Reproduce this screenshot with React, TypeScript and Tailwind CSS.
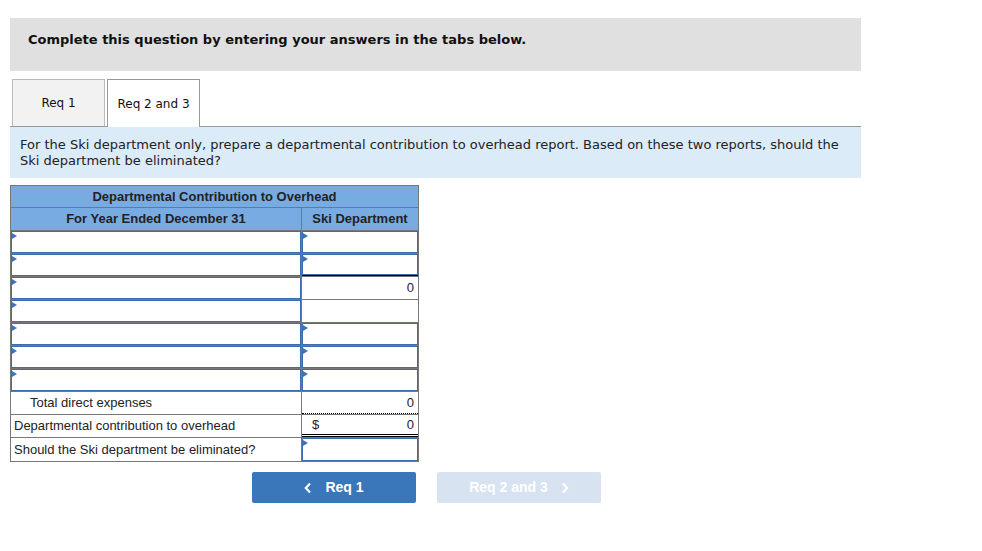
import React from 'react';

const verdana = { fontFamily: '"DejaVu Sans", Verdana, sans-serif' };
const arial = { fontFamily: '"Liberation Sans", Arial, sans-serif' };

const Marker: React.FC = () => (
  <span className="absolute left-[1px] top-[2px] h-0 w-0 border-y-[3px] border-l-[5px] border-y-transparent border-l-[#3d74bb]" />
);

const InputCell: React.FC<{ className?: string }> = ({ className = '' }) => (
  <div className={`relative h-full ${className}`}>
    <div className="h-full w-full border border-[#3b6db0] bg-white" />
    <Marker />
  </div>
);

type Row = {
  left: 'input' | string;
  indent?: boolean;
  right: 'input' | 'blank' | string;
  dollar?: boolean;
  rightBorder?: string;
};

const rows: Row[] = [
  { left: 'input', right: 'input' },
  { left: 'input', right: 'input', rightBorder: 'border-b border-b-black' },
  { left: 'input', right: '0' },
  { left: 'input', right: 'blank' },
  { left: 'input', right: 'input' },
  { left: 'input', right: 'input' },
  { left: 'input', right: 'input' },
  { left: 'Total direct expenses', indent: true, right: '0', rightBorder: 'border-b border-dotted border-b-black' },
  { left: 'Departmental contribution to overhead', right: '0', dollar: true, rightBorder: 'border-b-[3px] border-double border-b-black' },
  { left: 'Should the Ski department be eliminated?', right: 'input' },
];

export default function App() {
  return (
    <div className="min-h-screen bg-white pl-[10px] pt-[18px]" style={verdana}>
      <div className="w-[851px]">
        <div className="h-[53px] bg-[#e0e0e0] px-[18px] pt-[14px] text-[13px] font-bold leading-[16px] text-[#111]">
          Complete this question by entering your answers in the tabs below.
        </div>

        <div className="mt-[8px] flex items-end gap-[2px] border-b border-[#999] pl-[2px] text-[12px] text-[#111]">
          <div className="flex h-[47px] w-[93px] items-center justify-center border border-b-0 border-[#bbb] bg-[#f2f2f2]">
            Req 1
          </div>
          <div className="-mb-[1px] flex h-[48px] w-[93px] items-center justify-center border border-b-0 border-[#999] bg-white">
            Req 2 and 3
          </div>
        </div>

        <div className="h-[51px] bg-[#dbebf8] px-[10px] pt-[10px] text-[13px] leading-[16px] text-[#222]">
          For the Ski department only, prepare a departmental contribution to overhead report. Based on these two reports, should the Ski department be eliminated?
        </div>

        <div className="mt-[7px] w-[409px] border border-[#777] text-[13px] text-[#222]" style={arial}>
          <div className="flex h-[22px] items-center justify-center border-b border-[#777] bg-[#79abe3] font-bold">
            Departmental Contribution to Overhead
          </div>
          <div className="flex h-[23px] border-b border-[#777] bg-[#79abe3] font-bold">
            <div className="flex w-[291px] items-center justify-center border-r border-[#777]">For Year Ended December 31</div>
            <div className="flex flex-1 items-center justify-center">Ski Department</div>
          </div>
          {rows.map((r, i) => (
            <div key={i} className={`flex h-[23px] ${i < rows.length - 1 ? 'border-b border-[#777]' : ''}`}>
              <div className="w-[291px] border-r border-[#777]">
                {r.left === 'input' ? (
                  <InputCell />
                ) : (
                  <div className={`flex h-full items-center ${r.indent ? 'pl-[19px]' : 'pl-[3px]'}`}>{r.left}</div>
                )}
              </div>
              <div className="flex-1">
                {r.right === 'input' ? (
                  <InputCell className={r.rightBorder ?? ''} />
                ) : r.right === 'blank' ? (
                  <div className="h-full" />
                ) : (
                  <div className={`flex h-full items-center justify-between pl-[10px] pr-[4px] ${r.rightBorder ?? ''}`}>
                    <span>{r.dollar ? '$' : ''}</span>
                    <span>{r.right}</span>
                  </div>
                )}
              </div>
            </div>
          ))}
        </div>

        <div className="mt-[10px] flex gap-[21px] pl-[242px] text-[14px] font-bold text-white" style={arial}>
          <div className="flex h-[31px] w-[164px] items-center justify-center gap-[13px] rounded-[2px] bg-[#3a76ba]">
            <svg width="8" height="12" viewBox="0 0 8 12" fill="none" stroke="white" strokeWidth="2.2">
              <path d="M6 1.5 L1.8 6 L6 10.5" />
            </svg>
            <span>Req 1</span>
          </div>
          <div className="flex h-[31px] w-[164px] items-center justify-center gap-[13px] rounded-[2px] bg-[#d8e3f1]">
            <span>Req 2 and 3</span>
            <svg width="8" height="12" viewBox="0 0 8 12" fill="none" stroke="white" strokeWidth="2.2">
              <path d="M2 1.5 L6.2 6 L2 10.5" />
            </svg>
          </div>
        </div>
      </div>
    </div>
  );
}
